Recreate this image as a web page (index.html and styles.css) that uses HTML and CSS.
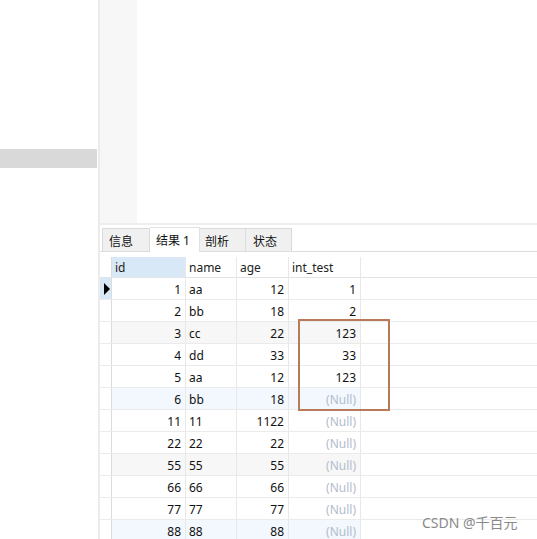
FILE: index.html
```html
<!DOCTYPE html>
<html lang="zh">
<head>
<meta charset="utf-8">
<title>Navicat 结果</title>
<link rel="stylesheet" href="styles.css">
</head>
<body>
<div class="app">
  <aside class="sidebar">
    <div class="side-selected"></div>
  </aside>
  <div class="vsep"></div>
  <main class="main">
    <section class="editor">
      <div class="gutter"></div>
      <div class="code"></div>
    </section>
    <div class="hsep"></div>
    <section class="results">
      <div class="tabs">
        <div class="tab t1">信息</div>
        <div class="tab t2 active">结果 1</div>
        <div class="tab t3">剖析</div>
        <div class="tab t4">状态</div>
      </div>
      <div class="grid">
        <div class="row head">
          <div class="c ind"></div>
          <div class="c cid sel">id</div>
          <div class="c cname">name</div>
          <div class="c cage">age</div>
          <div class="c cint">int_test</div>
        </div>
        <div class="row">
          <div class="c ind cur"><span class="arrow"></span></div>
          <div class="c cid num">1</div><div class="c cname">aa</div><div class="c cage num">12</div><div class="c cint num">1</div>
        </div>
        <div class="row">
          <div class="c ind"></div>
          <div class="c cid num">2</div><div class="c cname">bb</div><div class="c cage num">18</div><div class="c cint num">2</div>
        </div>
        <div class="row gray">
          <div class="c ind"></div>
          <div class="c cid num">3</div><div class="c cname">cc</div><div class="c cage num">22</div><div class="c cint num">123</div>
        </div>
        <div class="row">
          <div class="c ind"></div>
          <div class="c cid num">4</div><div class="c cname">dd</div><div class="c cage num">33</div><div class="c cint num">33</div>
        </div>
        <div class="row">
          <div class="c ind"></div>
          <div class="c cid num">5</div><div class="c cname">aa</div><div class="c cage num">12</div><div class="c cint num">123</div>
        </div>
        <div class="row blue">
          <div class="c ind"></div>
          <div class="c cid num">6</div><div class="c cname">bb</div><div class="c cage num">18</div><div class="c cint num null">(Null)</div>
        </div>
        <div class="row">
          <div class="c ind"></div>
          <div class="c cid num">11</div><div class="c cname">11</div><div class="c cage num">1122</div><div class="c cint num null">(Null)</div>
        </div>
        <div class="row">
          <div class="c ind"></div>
          <div class="c cid num">22</div><div class="c cname">22</div><div class="c cage num">22</div><div class="c cint num null">(Null)</div>
        </div>
        <div class="row gray">
          <div class="c ind"></div>
          <div class="c cid num">55</div><div class="c cname">55</div><div class="c cage num">55</div><div class="c cint num null">(Null)</div>
        </div>
        <div class="row">
          <div class="c ind"></div>
          <div class="c cid num">66</div><div class="c cname">66</div><div class="c cage num">66</div><div class="c cint num null">(Null)</div>
        </div>
        <div class="row">
          <div class="c ind"></div>
          <div class="c cid num">77</div><div class="c cname">77</div><div class="c cage num">77</div><div class="c cint num null">(Null)</div>
        </div>
        <div class="row blue">
          <div class="c ind"></div>
          <div class="c cid num">88</div><div class="c cname">88</div><div class="c cage num">88</div><div class="c cint num null">(Null)</div>
        </div>
      </div>
      <div class="mark"></div>
    </section>
  </main>
  <div class="watermark">CSDN @千百元</div>
</div>
</body>
</html>
```

FILE: styles.css
```css
html, body {
  margin: 0;
  padding: 0;
  background: #ffffff;
}
body {
  width: 537px;
  height: 539px;
  overflow: hidden;
  font-family: "Noto Sans", "Noto Sans CJK SC", sans-serif;
  font-size: 12px;
  color: #000;
}
.app {
  position: relative;
  display: flex;
  width: 537px;
  height: 539px;
}
.sidebar {
  width: 98px;
  flex: none;
  padding-top: 149px;
  box-sizing: border-box;
}
.side-selected {
  height: 19px;
  width: 97px;
  background: #d9d9d9;
}
.vsep {
  width: 2px;
  flex: none;
  background: #ebebeb;
}
.main {
  flex: 1;
  display: flex;
  flex-direction: column;
}
.editor {
  height: 223px;
  display: flex;
  flex: none;
}
.gutter {
  width: 37px;
  background: #f7f7f7;
}
.code {
  flex: 1;
  background: #fff;
}
.hsep {
  height: 2px;
  background: #eeeeee;
  flex: none;
}
.results {
  position: relative;
  flex: 1;
  padding-top: 1px;
}
.tabs {
  display: flex;
  align-items: flex-end;
  height: 25px;
  padding-left: 2px;
  border-bottom: 1px solid #dcdcdc;
}
.tab {
  box-sizing: border-box;
  height: 23px;
  padding: 4px 0 0 6px;
  line-height: 17px;
  background: #f0f0f0;
  border: 1px solid #dadada;
  border-bottom: none;
  color: #111;
  margin-bottom: 0;
}
.tab + .tab {
  border-left: none;
}
.t1 { width: 48px; }
.t2 { width: 50px; }
.t3 { width: 46px; padding-left: 5px; }
.t4 { width: 46px; padding-left: 7px; }
.tab.active {
  height: 25px;
  margin-bottom: -1px;
  background: #fff;
  padding-top: 4px;
  position: relative;
  border-color: #e2e2e2;
}
.grid {
  margin-top: 5px;
}
.row {
  display: flex;
  height: 22px;
  box-sizing: border-box;
  border-bottom: 1px solid #ebebeb;
  line-height: 21px;
}
.row.head {
  height: 21px;
  line-height: 20px;
  border-bottom-color: #e3e3e3;
}
.c {
  box-sizing: border-box;
  border-right: 1px solid #e8e8e8;
  padding: 1px 3px 0;
  white-space: nowrap;
  overflow: hidden;
  color: #111;
}
.ind {
  width: 12px;
  padding: 0;
  border-right-color: #dcdcdc;
  background: #fff;
  display: flex;
  align-items: center;
}
.cid { width: 74px; }
.cname { width: 51px; }
.cage { width: 52px; }
.cint { width: 72px; }
.head .c { color: #222; }
.sel { background: #d9e8f6; }
.num { text-align: right; padding-right: 4px; }
.row.gray .c:not(.ind) { background: #f7f7f7; }
.row.blue .c:not(.ind) { background: #f2f8fd; }
.null { color: #b3bccc; }
.ind.cur { background: #d9e8f6; }
.arrow {
  width: 0;
  height: 0;
  margin-left: 4px;
  border-top: 6px solid transparent;
  border-bottom: 6px solid transparent;
  border-left: 6px solid #000;
}
.mark {
  position: absolute;
  left: 198px;
  top: 94px;
  width: 92px;
  height: 92px;
  box-sizing: border-box;
  border: 2px solid #b87a58;
}
.watermark {
  position: absolute;
  left: 422px;
  top: 512px;
  font-size: 14px;
  color: #8a8a8a;
}
```
